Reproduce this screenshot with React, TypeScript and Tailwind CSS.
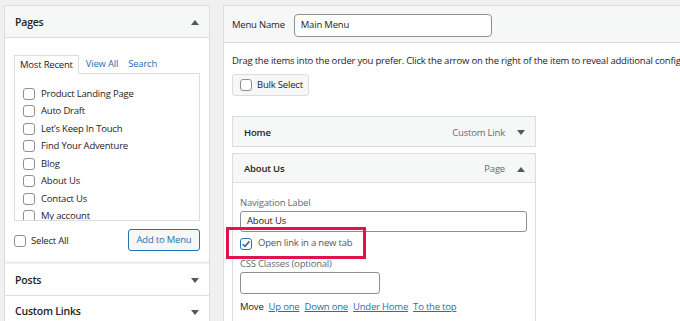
import React from "react";

const font = { fontFamily: '"Open Sans", "Noto Sans", sans-serif' };

function Tri({ up }: { up?: boolean }) {
  return (
    <svg width="8" height="5" viewBox="0 0 8 5" className="shrink-0">
      <path d={up ? "M0 5 L4 0 L8 5 Z" : "M0 0 L8 0 L4 5 Z"} fill="#50575e" />
    </svg>
  );
}

function Box({ checked }: { checked?: boolean }) {
  return (
    <span
      className={`flex h-[12px] w-[12px] shrink-0 items-center justify-center rounded-[3px] border bg-white ${
        checked ? "border-[#2271b1]" : "border-[#8c8f94]"
      }`}
    >
      {checked ? (
        <svg width="10" height="10" viewBox="0 0 10 10">
          <path d="M1.8 5.2 L4 7.4 L8.4 2.4" fill="none" stroke="#2271b1" strokeWidth="1.6" />
        </svg>
      ) : null}
    </span>
  );
}

const pages = [
  "Product Landing Page",
  "Auto Draft",
  "Let\u2019s Keep In Touch",
  "Find Your Adventure",
  "Blog",
  "About Us",
  "Contact Us",
  "My account",
];

export default function App() {
  return (
    <div
      style={font}
      className="relative flex h-[321px] w-[680px] items-start gap-[13px] overflow-hidden bg-[#f0f0f1] pl-[4px] pt-[5px] text-[9.5px] tracking-[-0.2px] text-[#1d2327]"
    >
      {/* left accordion */}
      <div className="h-[330px] w-[206px] shrink-0 overflow-hidden border border-[#dcdcde] bg-white">
        <div className="flex h-[32px] items-center justify-between border-b border-[#dcdcde] bg-[#f6f7f7] pl-[10px] pr-[10px] pt-[2px]">
          <span className="text-[10.5px] font-semibold">Pages</span>
          <Tri up />
        </div>
        <div className="px-[9px] pt-[17px]">
          <div className="flex items-end">
            <div className="relative z-10 -mb-px flex h-[19px] items-center border border-b-white border-[#dcdcde] bg-white px-[5px] pt-[2px]">
              Most Recent
            </div>
            <span className="ml-[7px] pb-[2px] text-[#2271b1]">View All</span>
            <span className="ml-[10px] pb-[2px] text-[#2271b1]">Search</span>
          </div>
          <div className="h-[148px] overflow-hidden border border-[#dcdcde] pl-[8px] pt-[11px]">
            {pages.map((p) => (
              <div key={p} className="flex h-[17.5px] items-center gap-[6px]">
                <Box />
                <span>{p}</span>
              </div>
            ))}
          </div>
          <div className="mt-[8px] flex items-center justify-between">
            <div className="flex items-center gap-[5px] pt-[2px]">
              <Box />
              <span>Select All</span>
            </div>
            <div className="flex h-[22px] w-[72px] items-center justify-center rounded-[3px] border border-[#2271b1] bg-[#f6f7f7] text-[#2271b1]">
              Add to Menu
            </div>
          </div>
        </div>
        <div className="mt-[10px] h-[3px] bg-[#f0f0f1]" />
        <div className="flex h-[32px] items-center justify-between border-b border-[#dcdcde] pl-[10px] pr-[10px] pt-[2px]">
          <span className="text-[10.5px] font-semibold">Posts</span>
          <Tri />
        </div>
        <div className="flex h-[30px] items-center justify-between pl-[10px] pr-[10px] pt-[2px]">
          <span className="text-[10.5px] font-semibold">Custom Links</span>
          <Tri />
        </div>
      </div>

      {/* right menu structure */}
      <div className="h-[330px] w-[600px] shrink-0 overflow-hidden border-l border-t border-[#dcdcde] bg-white">
        <div className="flex h-[37px] items-center border-b border-[#dcdcde] bg-[#f6f7f7] pl-[8px] pt-[3px]">
          <span>Menu Name</span>
          <div className="ml-[9px] flex h-[23px] w-[198px] items-center rounded-[4px] border border-[#8c8f94] bg-white px-[6px]">
            Main Menu
          </div>
        </div>
        <div className="pl-[8px]">
          <div className="mt-[11px] whitespace-nowrap">
            Drag the items into the order you prefer. Click the arrow on the right of the item to reveal additional configuration options.
          </div>
          <div className="mt-[6px] flex h-[22px] w-[77px] items-center gap-[5px] rounded-[3px] border border-[#dcdcde] bg-[#f6f7f7] pl-[7px]">
            <Box />
            <span>Bulk Select</span>
          </div>
          <div className="mt-[20px] flex h-[31px] w-[304px] items-center justify-between border border-[#dcdcde] bg-[#f6f7f7] pl-[11px] pr-[10px] pt-[2px]">
            <span className="font-semibold">Home</span>
            <div className="flex items-center gap-[12px]">
              <span className="text-[#646970]">Custom Link</span>
              <Tri />
            </div>
          </div>
          <div className="mt-[6px] w-[304px] border border-[#dcdcde]">
            <div className="flex h-[29px] items-center justify-between border-b border-[#dcdcde] bg-[#f6f7f7] pl-[11px] pr-[10px] pt-[2px]">
              <span className="font-semibold">About Us</span>
              <div className="flex items-center gap-[12px]">
                <span className="text-[#646970]">Page</span>
                <Tri up />
              </div>
            </div>
            <div className="h-[200px] bg-white pl-[7px] pr-[8px] pt-[13px]">
              <div className="text-[#646970]">Navigation Label</div>
              <div className="flex h-[21px] items-center rounded-[3px] border border-[#8c8f94] px-[6px]">
                About Us
              </div>
              <div className="mt-[6px] flex h-[12px] items-center gap-[6px]">
                <Box checked />
                <span className="text-[#50575e]">Open link in a new tab</span>
              </div>
              <div className="mt-[7px] text-[#646970]">CSS Classes (optional)</div>
              <div className="mt-[1px] h-[22px] w-[140px] rounded-[3px] border border-[#8c8f94]" />
              <div className="mt-[6px] flex items-center gap-[5px] whitespace-nowrap">
                <span>Move</span>
                <span className="text-[#2271b1] underline">Up one</span>
                <span className="text-[#2271b1] underline">Down one</span>
                <span className="text-[#2271b1] underline">Under Home</span>
                <span className="text-[#2271b1] underline">To the top</span>
              </div>
            </div>
          </div>
        </div>
      </div>

      {/* highlight annotation */}
      <div className="absolute left-[226px] top-[227px] h-[32px] w-[140px] border-[3px] border-[#e0134f]" />
    </div>
  );
}
